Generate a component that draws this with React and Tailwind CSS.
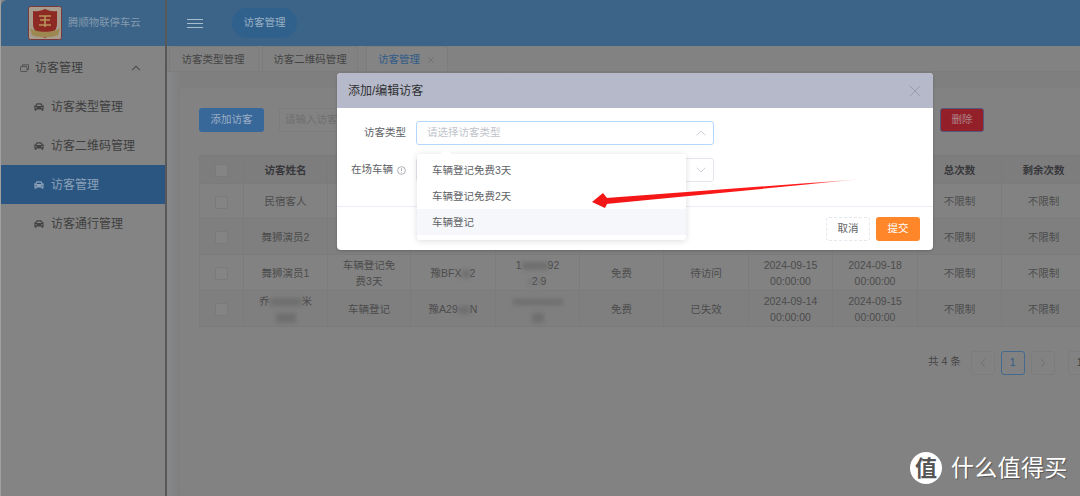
import React from "react";
import { FaCar } from "react-icons/fa";
import { ChevronUp, ChevronDown, ChevronLeft, ChevronRight, X } from "lucide-react";

const font = { fontFamily: '"Liberation Sans","Noto Sans CJK SC",sans-serif' };

function Logo() {
  return (
    <svg width="34" height="34" viewBox="0 0 34 34" className="shrink-0">
      <rect x="0.5" y="0.5" width="33" height="33" rx="2" fill="#a89c8e" stroke="#7a3a3a" />
      <path d="M5 5 C11 6 14 4 17 3 C20 4 23 6 29 5 L29 18 C29 25 23 29 17 32 C11 29 5 25 5 18 Z" fill="#8e2a24" />
      <path d="M11 10 H23 M17 10 V21 M12 14 H22 M11 19 H23" stroke="#b8945a" strokeWidth="1.6" fill="none" />
      <path d="M2 22 C8 27 26 27 32 22 L30 29 C24 32 10 32 4 29 Z" fill="#9c8850" />
    </svg>
  );
}

function SideItem({ label, active }) {
  return (
    <div className={`h-[39px] pt-[1px] flex items-center pl-[33px] gap-[7px] text-[12px] ${active ? "bg-[#2b5682] text-[#8ba2b8]" : "text-[#3e3e3e]"}`}>
      <FaCar className={`w-[10px] h-[10px] ${active ? "text-[#8ba2b8]" : "text-[#444]"}`} />
      <span>{label}</span>
    </div>
  );
}

function Blur({ w, h = 8, className = "" }) {
  return <span className={`inline-block align-middle bg-[#6f6f6f] blur-[2px] ${className}`} style={{ width: w, height: h }} />;
}

const rows = [
  { h: "h-[35px]", bg: "bg-[#828282]", name: "民宿客人", type: "车辆登记", plate: "豫A00000", phone: "13800000000", fee: "免费", st: "待访问", a: ["2024-09-15", "00:00:00"], b: ["2024-09-18", "00:00:00"] },
  { h: "h-[36px]", bg: "bg-[#7f7f7f]", name: "舞狮演员2", type: "车辆登记免费3天", plate: "豫A00000", phone: "13800000000", fee: "免费", st: "待访问", a: ["2024-09-15", "00:00:00"], b: ["2024-09-18", "00:00:00"] },
  { h: "h-[36px]", bg: "bg-[#828282]", name: "舞狮演员1", type: "车辆登记免费3天", plate: <>豫BFX<Blur w={8} />2</>, phone: <>1<Blur w={26} />92<br /><Blur w={3} h={6} />2<Blur w={3} h={6} />9</>, fee: "免费", st: "待访问", a: ["2024-09-15", "00:00:00"], b: ["2024-09-18", "00:00:00"] },
  { h: "h-[36px]", bg: "bg-[#7f7f7f]", name: <>乔<Blur w={32} />米<br /><Blur w={20} h={10} /></>, type: "车辆登记", plate: <>豫A29<Blur w={12} />N</>, phone: <><Blur w={50} h={6} /><br /><Blur w={12} h={10} /></>, fee: "免费", st: "已失效", a: ["2024-09-14", "00:00:00"], b: ["2024-09-15", "00:00:00"] },
];

const widths = [44, 84, 83, 85, 84, 84, 85, 84, 85, 84, 84];
const heads = ["", "访客姓名", "访客类型", "车牌号码", "手机号码", "收费类型", "访客状态", "开始时间", "结束时间", "总次数", "剩余次数"];
const td = "border-r border-b border-[#7b7b7b] text-center align-middle px-[12px] leading-[16px]";

function Check() {
  return <span className="inline-block w-[13px] h-[13px] rounded-[2px] border border-[#7a7a7a] bg-[#848484] align-middle" />;
}

function PageBtn({ children, active }) {
  return (
    <div className={`w-[24px] h-[24px] rounded-[3px] border flex items-center justify-center text-[10.5px] ${active ? "border-[#44698f] text-[#2f5b88]" : "border-[#7c7c7c] text-[#6a6a6a]"}`}>
      {children}
    </div>
  );
}

export default function App() {
  return (
    <div style={font} className="relative w-[1080px] h-[496px] overflow-hidden flex bg-[#828282]">
      <aside className="w-[167px] shrink-0 h-full flex flex-col bg-[#848484] border-r-2 border-[#585858] border-l border-l-[#a0a0a0]">
        <div className="h-[46px] bg-[#3b6488] flex items-center pl-[27px] gap-[6px] rounded-tl-[6px]">
          <Logo />
          <span className="text-[10.4px] text-[#849aae] whitespace-nowrap">腾顺物联停车云</span>
        </div>
        <div className="h-[44px] flex items-center pl-[19px] pr-[22px] text-[12px] text-[#3e3e3e]">
          <svg width="9" height="8" viewBox="0 0 9 8" fill="none" stroke="#4e4e4e" strokeWidth="0.9" className="mr-[6px]">
            <rect x="0.5" y="2.5" width="6.5" height="5" rx="0.8" />
            <path d="M2.5 2.5 V0.8 H8.5 V5.5 H7" />
          </svg>
          <span className="flex-1">访客管理</span>
          <ChevronUp className="w-[14px] h-[14px] text-[#3e3e3e]" strokeWidth={1.75} />
        </div>
        <div className="-mt-[3px]">
          <SideItem label="访客类型管理" />
          <SideItem label="访客二维码管理" />
          <SideItem label="访客管理" active />
          <SideItem label="访客通行管理" />
        </div>
      </aside>

      <main className="flex-1 min-w-0 flex flex-col">
        <header className="h-[46px] shrink-0 bg-[#3b6488] flex items-center pl-[20px]">
          <div className="w-[16px] flex flex-col gap-[3px]">
            <span className="h-[1px] bg-[#a9bccb]" />
            <span className="h-[1px] bg-[#a9bccb]" />
            <span className="h-[1px] bg-[#a9bccb]" />
          </div>
          <div className="ml-[29px] w-[65px] h-[30px] rounded-full bg-[#30608c] text-[#9ab0c3] text-[10.5px] flex items-center justify-center">访客管理</div>
        </header>
        <div className="h-[26px] shrink-0 flex items-stretch gap-[3px] pl-[2px] text-[10.5px] text-[#444] border-b border-[#7c7c7c] bg-[#828282]">
          <div className="w-[90px] pr-[2px] pt-[2px] flex items-center justify-center border border-b-0 border-[#7c7c7c] rounded-t-[3px]">访客类型管理</div>
          <div className="w-[96px] pt-[2px] flex items-center justify-center border border-b-0 border-[#7c7c7c] rounded-t-[3px]">访客二维码管理</div>
          <div className="ml-[5px] w-[82px] pt-[2px] flex items-center justify-center gap-[6px] border border-b-0 border-[#7c7c7c] rounded-t-[3px] text-[#2f5b88] bg-[#848484]">
            访客管理 <X className="w-[10px] h-[10px] text-[#666]" strokeWidth={1.5} />
          </div>
        </div>
        <div className="flex-1 min-h-0 pl-[13px] pt-[16px] bg-gradient-to-r from-[#85888b] to-[#7f7f7f] to-[13px]">
          <div className="w-[960px] h-full bg-[#828282] rounded-[3px] pl-[19px] pt-[20px]">
            <div className="flex h-[24px]">
              <div className="w-[65px] rounded-[3px] bg-[#38679a] text-[#9cb0c4] text-[10.5px] flex items-center justify-center">添加访客</div>
              <div className="ml-[15px] w-[120px] rounded-[3px] border border-[#7c7c7c] text-[#6f6f6f] text-[10.5px] flex items-center pl-[5px] overflow-hidden whitespace-nowrap">请输入访客姓名</div>
              <div className="ml-[541px] w-[44px] rounded-[3px] bg-[#932028] border border-[#55587a] text-[#ad8488] text-[10.5px] flex items-center justify-center">删除</div>
            </div>
            <table className="mt-[23px] table-fixed border-collapse border-t border-l border-[#7b7b7b] text-[10.5px] text-[#4c4c4c]" style={{ width: 886 }}>
              <colgroup>
                {widths.map((w, i) => <col key={i} style={{ width: w }} />)}
              </colgroup>
              <thead>
                <tr className="h-[28px] bg-[#7d7d7d] font-bold text-[#38383c]">
                  {heads.map((t, i) => (
                    <th key={i} className={`${td} !px-0`}>{i === 0 ? <Check /> : t}</th>
                  ))}
                </tr>
              </thead>
              <tbody>
                {rows.map((r, i) => (
                  <tr key={i} className={`${r.h} ${r.bg}`}>
                    <td className={`${td} !px-0`}><Check /></td>
                    <td className={td}>{r.name}</td>
                    <td className={td}>{r.type}</td>
                    <td className={`${td} !px-0`}>{r.plate}</td>
                    <td className={td}>{r.phone}</td>
                    <td className={td}>{r.fee}</td>
                    <td className={td}>{r.st}</td>
                    <td className={`${td} !px-0`}>{r.a[0]}<br />{r.a[1]}</td>
                    <td className={`${td} !px-0`}>{r.b[0]}<br />{r.b[1]}</td>
                    <td className={td}>不限制</td>
                    <td className={td}>不限制</td>
                  </tr>
                ))}
              </tbody>
            </table>
            <div className="mt-[24px] flex items-center text-[10.5px] text-[#444] whitespace-nowrap">
              <span className="ml-[729px] mr-[10px] pb-[2px]">共 4 条</span>
              <div className="flex gap-[6px]">
                <PageBtn><ChevronLeft className="w-[14px] h-[14px]" strokeWidth={1.5} /></PageBtn>
                <PageBtn active>1</PageBtn>
                <PageBtn><ChevronRight className="w-[14px] h-[14px]" strokeWidth={1.5} /></PageBtn>
              </div>
              <div className="ml-[13px] w-[40px] h-[24px] rounded-[3px] border border-[#7c7c7c] flex items-center pl-[8px]">1</div>
            </div>
          </div>
        </div>
      </main>

      {/* modal */}
      <div className="absolute left-[337px] top-[73px] w-[596px] h-[177px] rounded-[4px] bg-white shadow-[0_1px_3px_rgba(0,0,0,0.2)]">
        <div className="h-[35px] pt-[1px] bg-[#b6b9c9] rounded-t-[4px] flex items-center justify-between pl-[11px] pr-[8px] text-[12px] text-[#303133]">
          <span>添加/编辑访客</span>
          <X className="w-[20px] h-[20px] text-[#9a9da8]" strokeWidth={1.2} />
        </div>
        <div className="pt-[13px] h-[99px] border-b border-[#ebeef5] text-[10.5px] text-[#606266]">
          <div className="flex items-center h-[24px]">
            <span className="w-[69px] text-right">访客类型</span>
            <div className="ml-[10px] w-[298px] h-[24px] rounded-[3px] border border-[#b3d8ff] flex items-center justify-between pl-[10px] pr-[4px] text-[#c0c4cc]">
              请选择访客类型
              <ChevronUp className="w-[16px] h-[16px]" strokeWidth={1.2} />
            </div>
          </div>
          <div className="flex items-center h-[24px] mt-[13px]">
            <span className="w-[69px] text-right flex items-center justify-end gap-[4px] whitespace-nowrap">在场车辆
              <svg width="9" height="9" viewBox="0 0 10 10" fill="none" stroke="#909399" strokeWidth="0.8" className="shrink-0">
                <circle cx="5" cy="5" r="4.3" />
                <path d="M5 2.5 V5.6 M5 6.8 V7.6" />
              </svg>
            </span>
            <div className="ml-[10px] w-[298px] h-[24px] rounded-[3px] border border-[#e4e7ed] flex items-center justify-end pr-[4px] text-[#c0c4cc]">
              <ChevronDown className="w-[16px] h-[16px]" strokeWidth={1.2} />
            </div>
          </div>
        </div>
        <div className="flex justify-end gap-[6px] pt-[10px] pr-[13px] text-[10.5px]">
          <div className="w-[44px] h-[24px] rounded-[3px] border border-dashed border-[#e4e7ed] text-[#606266] flex items-center justify-center">取消</div>
          <div className="w-[44px] h-[24px] rounded-[3px] bg-[#ff8629] text-white flex items-center justify-center">提交</div>
        </div>

        {/* dropdown */}
        <div className="absolute left-[80px] top-[81px] w-[269px] h-[86px] bg-white rounded-[3px] shadow-[0_1px_6px_rgba(0,0,0,0.14)] py-[4px] text-[10.5px] text-[#606266]">
          <div className="absolute -top-[4px] left-[25px] w-[8px] h-[8px] bg-white rotate-45" />
          <div className="h-[25px] pt-[1px] flex items-center pl-[15px]">车辆登记免费3天</div>
          <div className="h-[26px] pt-[1px] flex items-center pl-[15px]">车辆登记免费2天</div>
          <div className="h-[26px] pt-[1px] flex items-center pl-[15px] bg-[#f5f7fa]">车辆登记</div>
        </div>
      </div>

      {/* annotation arrow */}
      <svg className="absolute left-[585px] top-[170px]" width="285" height="45" viewBox="585 170 285 45">
        <defs>
          <linearGradient id="ar" x1="863" y1="179" x2="600" y2="201" gradientUnits="userSpaceOnUse">
            <stop offset="0" stopColor="#ff1a1a" stopOpacity="0" />
            <stop offset="0.22" stopColor="#ff1a1a" />
            <stop offset="1" stopColor="#f21616" />
          </linearGradient>
        </defs>
        <path d="M863 179 L606 198 L606 204 Z" fill="url(#ar)" />
        <path d="M592 202 L603 193 L607 198 L607 204 L605 208 Z" fill="#f21616" />
      </svg>

      {/* watermark */}
      <div className="absolute left-[910px] top-[452px] flex items-center gap-[9px]">
        <div className="w-[32px] h-[32px] rounded-full bg-white text-[#555] text-[22px] font-bold flex items-center justify-center">值</div>
        <span className="text-[23px] leading-none tracking-[0.3px] text-white whitespace-nowrap [text-shadow:1px_1px_1px_rgba(0,0,0,0.35)]">什么值得买</span>
      </div>
    </div>
  );
}
